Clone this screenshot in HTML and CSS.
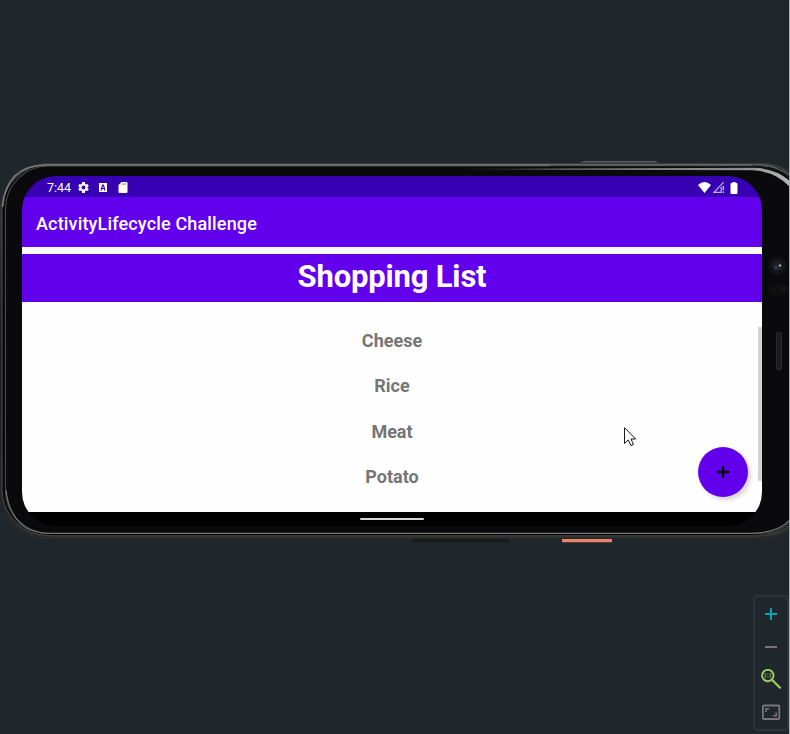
FILE: index.html
```html
<!DOCTYPE html>
<html lang="en">
<head>
<meta charset="utf-8">
<title>Emulator</title>
<link rel="stylesheet" href="styles.css">
</head>
<body>
<main class="stage">
  <svg class="frame" viewBox="0 0 790 734" aria-hidden="true">
    <defs>
      <linearGradient id="rim" x1="0" y1="163" x2="0" y2="540" gradientUnits="userSpaceOnUse">
        <stop offset="0" stop-color="#393a3a"/><stop offset=".5" stop-color="#1b1c1d"/><stop offset="1" stop-color="#292b2b"/>
      </linearGradient>
      <linearGradient id="shine" x1="460" y1="0" x2="790" y2="0" gradientUnits="userSpaceOnUse">
        <stop offset="0" stop-color="#0a0a0c"/><stop offset=".3" stop-color="#777978"/><stop offset=".85" stop-color="#8d8f8e"/><stop offset="1" stop-color="#b5b6b5"/>
      </linearGradient>
    </defs>
    <path d="M579 162.500L584 161H655L659 162.500Z" fill="#596066"/>
    <path d="M411 538H511L508 542.500H414Z" fill="#1a1a1b"/>
    <rect x="562" y="537" width="50" height="5.200" rx="1" fill="#ed8467"/>
    <rect x="0" y="163" width="810" height="376" rx="48" fill="url(#rim)"/>
    <rect x="2" y="164.500" width="807" height="371" rx="46" fill="#080809" stroke="#4a4c4c"/>
    <rect x="5.500" y="166" width="799" height="367" rx="43" fill="#0a0a0c" stroke="#454747" stroke-width="1.200"/>
    <path d="M2.500 207Q6 165 47 165H751" fill="none" stroke="#7b7d7c" stroke-width="1.500"/>
    <path d="M6 490Q11 533.500 50 533.500H750Q778 533 790 520" fill="none" stroke="#717372" stroke-width="1.200"/>
    <path d="M50 536H750Q778 535.500 790 525" fill="none" stroke="#353737" stroke-width="2"/>
    <path d="M460 168.800L755 167.800Q776 168.500 790 181L790 187Q775 171 752 170.300L460 169.200Z" fill="url(#shine)"/>
    <path d="M550 166.500H755Q776 167 790 178" fill="none" stroke="#151617" stroke-width="1.500"/>
    <path d="M550 164.800H760Q777 166 790 175" fill="none" stroke="#5e6060" stroke-width="1.300"/>
    <circle cx="777.500" cy="266" r="9" fill="#131416"/>
    <circle cx="777.500" cy="266" r="5" fill="#1e2126"/>
    <circle cx="776" cy="267.500" r="2" fill="#30344c"/>
    <circle cx="780" cy="265.500" r="1.200" fill="#a5a6a6"/>
    <rect x="769" y="285.500" width="19" height="8" rx="4" fill="#0d0d0f" stroke="#131315"/>
    <circle cx="773" cy="289.500" r="3" fill="#111113"/><circle cx="783.500" cy="289.500" r="3" fill="#131315"/>
    <rect x="776.500" y="332" width="5" height="38" rx="2" fill="#1c1d1d" stroke="#2a2b2b"/>
  </svg>

  <section class="screen">
    <header class="status">
      <span class="clock">7:44</span>
      <svg class="gear" viewBox="2 2 20 20"><path fill="#fff" fill-rule="evenodd" d="M19.400 13a7.500 7.500 0 0 0 0-2l2.200-1.700-2.200-3.800-2.700 1a8 8 0 0 0-1.700-1L14.600 2H9.400L9 5.500a8 8 0 0 0-1.700 1l-2.700-1-2.200 3.800L4.600 11a7.500 7.500 0 0 0 0 2l-2.200 1.700 2.200 3.800 2.700-1a8 8 0 0 0 1.700 1l.4 3.500h5.200l.4-3.500a8 8 0 0 0 1.700-1l2.700 1 2.200-3.800ZM12 8.400a3.600 3.600 0 1 1 0 7.200 3.600 3.600 0 0 1 0-7.200Z"/></svg>
      <svg class="abox" viewBox="0 0 8 9"><rect width="8" height="9" fill="#fff"/><path d="M2 7.500L3.600 2H4.400L6 7.500M2.700 5.500H5.300" fill="none" stroke="#3700b3" stroke-width="1.100"/></svg>
      <svg class="sd" viewBox="0 0 9 11"><path d="M3 0H8Q9 0 9 1V10Q9 11 8 11H1Q0 11 0 10V3Z" fill="#fff"/><path d="M3.500 1.200V3M5.200 1.200V3M6.900 1.200V3" stroke="#8062cf" stroke-width=".8"/></svg>
      <span class="grow"></span>
      <svg class="wifi" viewBox="0 0 13 11"><path d="M0 3Q6.500-3 13 3L6.500 11Z" fill="#fff"/></svg>
      <svg class="signal" viewBox="0 0 11 11"><path d="M10.700 .3L1 10.400H8.200V5" fill="none" stroke="#c3b3e8" stroke-width="1.200"/><path d="M10.300 4V8.200M10.300 9.500V11" stroke="#d8cef0" stroke-width="1.300"/></svg>
      <svg class="battery" viewBox="0 0 7 12"><path d="M2 0H5V1H6Q7 1 7 2V11Q7 12 6 12H1Q0 12 0 11V2Q0 1 1 1H2Z" fill="#fff"/></svg>
    </header>
    <div class="appbar">ActivityLifecycle Challenge</div>
    <h1 class="title">Shopping List</h1>
    <ul class="list"><li>Cheese</li><li>Rice</li><li>Meat</li><li>Potato</li></ul>
    <div class="navbar"><span class="pill"></span></div>
    <span class="scrollbar"></span>
    <button class="fab" aria-label="Add"><svg viewBox="0 0 12 12"><path d="M6 0V12M0 6H12" stroke="#000" stroke-width="2.400"/></svg></button>
  </section>

  <svg class="cursor" viewBox="0 0 13 20"><path d="M.5.700V16.500L4.200 13L7 18.600L9.500 17.500L7 12H11.700Z" fill="#fff" stroke="#15151d"/></svg>

  <nav class="tools">
    <svg viewBox="0 0 20 20"><path d="M10 4V16M4 10H16" stroke="#04a5b8" stroke-width="2"/></svg>
    <svg viewBox="0 0 20 20"><path d="M4 10H16" stroke="#777" stroke-width="2"/></svg>
    <svg viewBox="0 0 20 20"><circle cx="6.800" cy="6.500" r="5.700" fill="none" stroke="#9dcb63" stroke-width="1.900"/><path d="M11 10.800L19.500 19.300" stroke="#9dcb63" stroke-width="2.200"/><path d="M4.300 4V9M9.300 4V9M6.800 4.800V6M6.800 7.300V8.500" stroke="#738f50" stroke-width="1.100"/></svg>
    <svg viewBox="0 0 20 20"><rect x="1.900" y="3.500" width="16.400" height="13.500" rx=".8" fill="none" stroke="#777" stroke-width="1.800"/><path d="M5 10V6.800H8.200M15.200 10.500V13.700H12" fill="none" stroke="#777" stroke-width="1.600"/></svg>
  </nav>
  <span class="edge"></span>
</main>
</body>
</html>
```

FILE: styles.css
```css
* { box-sizing: border-box; }
body { margin: 0; background: #1f272c; font-family: Roboto, sans-serif; }
svg { display: block; flex: none; }
.stage { position: relative; width: 790px; height: 734px; overflow: hidden; padding: 176px 28px 0 22px; }
.frame { position: absolute; inset: 0; width: 790px; height: 734px; }
.screen { position: relative; width: 740px; height: 350px; border-radius: 34px; overflow: hidden; background: #000; display: flex; flex-direction: column; }
.status { height: 21px; flex: none; background: #3700b3; display: flex; align-items: center; padding: 2px 24px 0 25px; color: #fff; font-size: 12.500px; }
.clock { width: 31px; }
.gear { width: 11px; height: 11px; margin-right: 10px; }
.abox { width: 8px; height: 9px; margin-right: 11px; }
.sd { width: 10px; height: 11px; }
.grow { flex: 1; }
.wifi { width: 13px; height: 11px; margin-right: 2px; }
.signal { width: 11px; height: 11px; margin-right: 6px; }
.battery { width: 8px; height: 12px; }
.appbar { height: 50px; flex: none; background: #6200ee; color: #fff; font-size: 18px; font-weight: 500; line-height: 53px; padding-left: 14px; letter-spacing: .16px; }
.title { height: 55px; flex: none; margin: 0; border-top: 7px solid #fefefe; background: #6200ee; color: #fff; text-align: center; font-size: 31px; font-weight: 700; line-height: 45px; letter-spacing: -.18px; }
.list { flex: 1; margin: 0; padding: 16px 0 0; background: #fefefe; list-style: none; text-align: center; color: #757575; font-size: 18px; font-weight: 700; }
.list li { height: 45.400px; line-height: 45px; }
.navbar { height: 14px; flex: none; background: #000; display: flex; justify-content: center; padding-top: 6px; }
.pill { width: 64px; height: 2px; background: #d5d9d9; border-radius: 1px; }
.scrollbar { position: absolute; left: 736px; top: 151px; width: 4px; height: 154px; background: #d3d3d3; }
.fab { position: absolute; left: 676px; top: 271px; width: 50px; height: 50px; border: 0; border-radius: 50%; background: #6200ee; padding: 0; display: grid; place-items: center; box-shadow: 3px 3px 4px rgba(0,0,0,.16); }
.fab svg { width: 12px; height: 12px; }
.cursor { position: absolute; left: 624px; top: 427px; width: 13px; height: 20px; }
.tools { position: absolute; left: 753px; top: 595px; width: 36px; height: 136px; border: 2px solid #29353b; border-radius: 5px; display: flex; flex-direction: column; align-items: center; gap: 12.600px; padding-top: 7px; }
.tools svg { width: 20px; height: 20px; }
.edge { position: absolute; right: 0; top: 0; width: 1px; height: 734px; background: #a9acad; }
```
